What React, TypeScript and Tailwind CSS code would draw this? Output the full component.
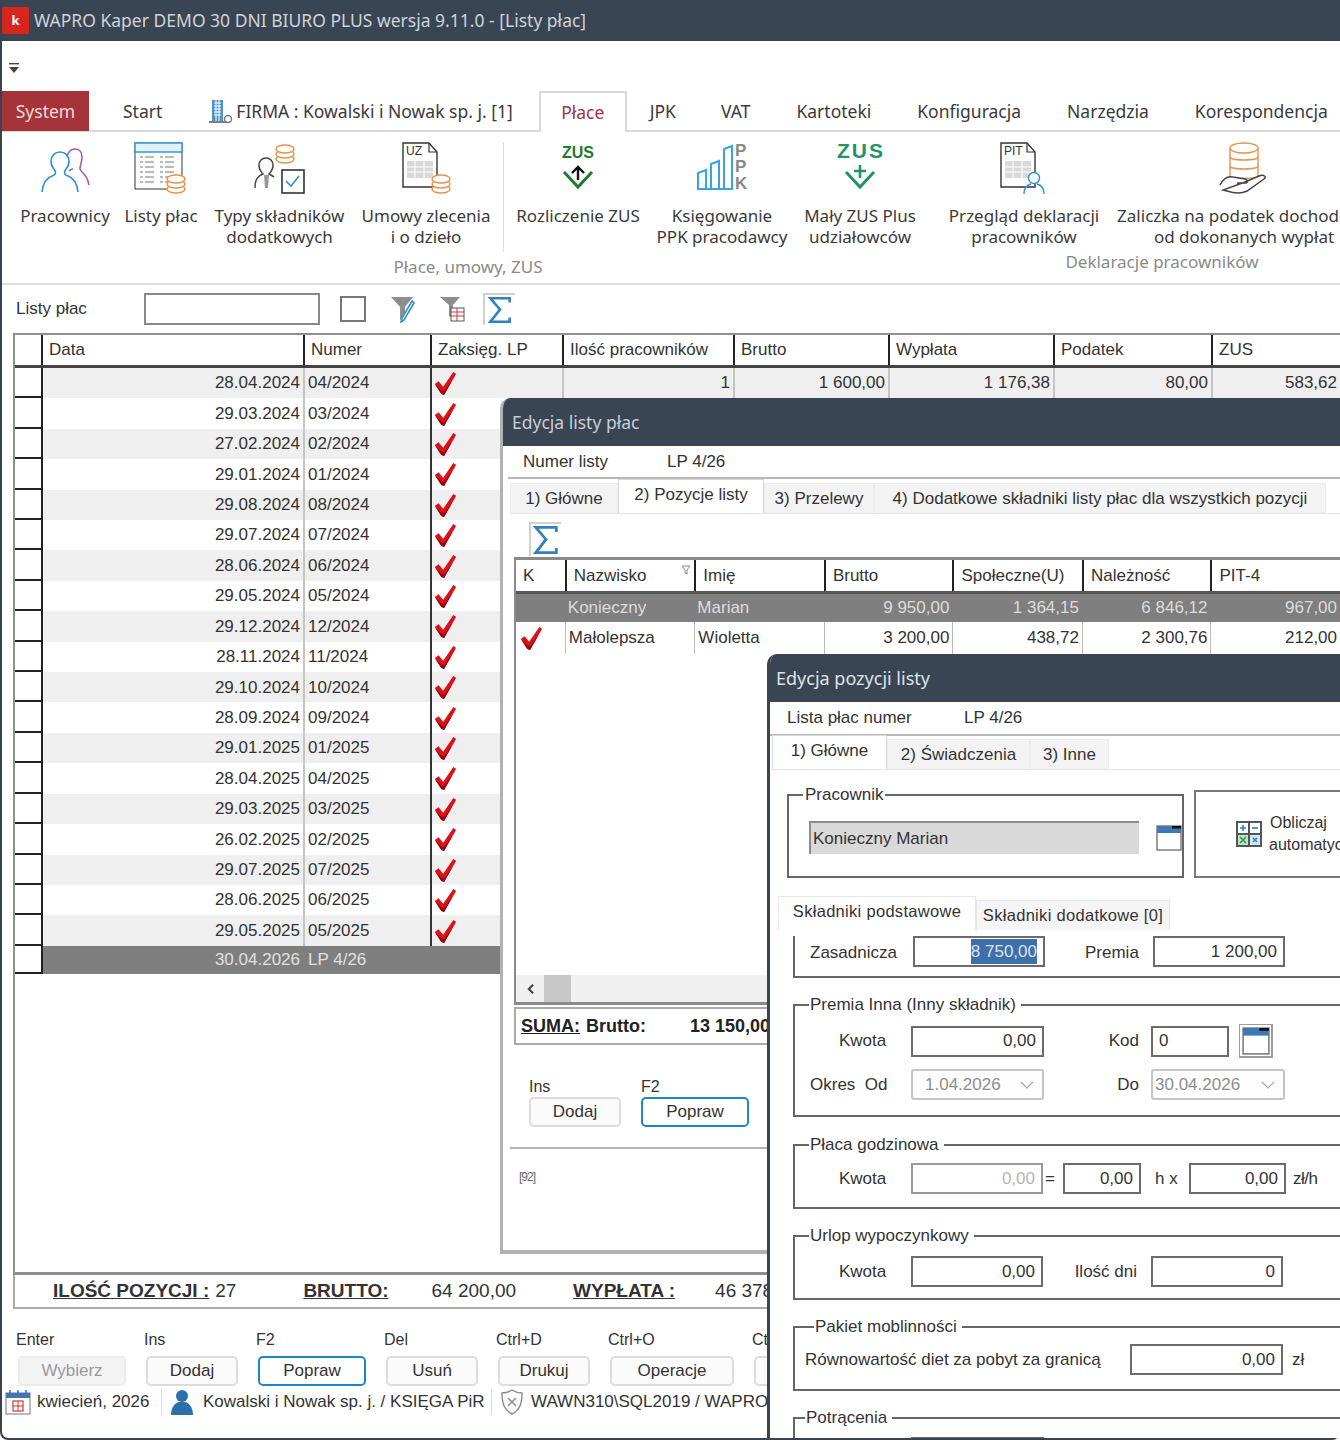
import type { ReactNode } from "react";

const NOTO = "font-['Noto_Sans',sans-serif]";

const rows = [
  ["28.04.2024", "04/2024"],
  ["29.03.2024", "03/2024"],
  ["27.02.2024", "02/2024"],
  ["29.01.2024", "01/2024"],
  ["29.08.2024", "08/2024"],
  ["29.07.2024", "07/2024"],
  ["28.06.2024", "06/2024"],
  ["29.05.2024", "05/2024"],
  ["29.12.2024", "12/2024"],
  ["28.11.2024", "11/2024"],
  ["29.10.2024", "10/2024"],
  ["28.09.2024", "09/2024"],
  ["29.01.2025", "01/2025"],
  ["28.04.2025", "04/2025"],
  ["29.03.2025", "03/2025"],
  ["26.02.2025", "02/2025"],
  ["29.07.2025", "07/2025"],
  ["28.06.2025", "06/2025"],
  ["29.05.2025", "05/2025"],
];

const mainColumns = [
  { name: "Data", w: "w-[262px]" },
  { name: "Numer", w: "w-[127px]" },
  { name: "Zaksięg. LP", w: "w-[132px]" },
  { name: "Ilość pracowników", w: "w-[171px]" },
  { name: "Brutto", w: "w-[155px]" },
  { name: "Wypłata", w: "w-[165px]" },
  { name: "Podatek", w: "w-[158px]" },
  { name: "ZUS", w: "w-[140px]" },
];

const shortcuts = [
  { key: "Enter", label: "Wybierz", w: "w-[108px]", kind: "off" },
  { key: "Ins", label: "Dodaj", w: "w-[92px]", kind: "" },
  { key: "F2", label: "Popraw", w: "w-[108px]", kind: "on" },
  { key: "Del", label: "Usuń", w: "w-[92px]", kind: "" },
  { key: "Ctrl+D", label: "Drukuj", w: "w-[92px]", kind: "" },
  { key: "Ctrl+O", label: "Operacje", w: "w-[124px]", kind: "" },
  { key: "Ctrl", label: "", w: "w-[92px]", kind: "" },
];

const Check = ({ className = "" }: { className?: string }) => (
  <svg viewBox="0 0 24 26" className={className}>
    <path d="M1 14 5 11 10 17 21 1 24 3 11 26 8 25Z" fill="#e0101a" />
    <path d="M1 14 8 25 11 26 24 3 22 7 11 22 8 21Z" fill="#8e0a10" />
  </svg>
);

const Sigma = ({ className = "" }: { className?: string }) => (
  <svg viewBox="0 0 24 28" className={className} fill="none">
    <path d="M21 7V3H3l9 10.5L3 25h18v-4" stroke="#2f7fc1" strokeWidth="2.4" />
  </svg>
);

const Coins = ({ x, y, n = 3 }: { x: number; y: number; n?: number }) => (
  <g fill="#fff" stroke="#e8924a" strokeWidth="1.4">
    {Array.from({ length: n }).map((_, i) => (
      <ellipse key={i} cx={x} cy={y - i * 5} rx="9" ry="4" />
    ))}
  </g>
);

const PeopleIcon = () => (
  <svg viewBox="0 0 52 52" className="w-[52px] h-[52px]" fill="none" strokeWidth="1.6">
    <path d="M28 15c1-5 4-8 8-8s7 3 7 8-2 8-2 12c0 3 7 4 9 16" stroke="#a35bb0" />
    <path d="M30 29c1-1 3-2 4-2" stroke="#a35bb0" />
    <path d="M3 50c1-11 6-15 12-17 2-1 2-3 0-6-2-2-3-5-3-8 0-5 4-9 9-9s9 4 9 9c0 3-1 6-3 8-2 3-2 5 0 6 6 2 11 6 12 17" stroke="#2d93d0" />
  </svg>
);

const ListIcon = () => (
  <svg viewBox="0 0 54 54" className="w-[54px] h-[54px]" fill="none">
    <rect x="1" y="1" width="47" height="46" fill="#fff" stroke="#556" strokeWidth="1.2" />
    <rect x="1" y="1" width="47" height="9" fill="#e3f1fb" stroke="#2d93d0" strokeWidth="1.4" />
    {[15, 20, 25, 30, 35, 40].map((y) => (
      <path key={y} d={`M6 ${y}h3M11 ${y}h9M26 ${y}h3M31 ${y}h9`} stroke="#777" strokeWidth="1.2" />
    ))}
    <Coins x={42} y={47} />
  </svg>
);

const TypesIcon = () => (
  <svg viewBox="0 0 54 54" className="w-[54px] h-[54px]" fill="none">
    <Coins x={32} y={17} n={3} />
    <path d="M2 46c0-9 3-12 8-14-3-3-4-6-4-9 0-4 3-7 7-7s7 3 7 7c0 3-1 6-4 9 2 1 4 2 5 3" fill="#fff" stroke="#444" strokeWidth="1.5" />
    <path d="M11 33l1 13h3l1-13z" fill="#999" />
    <rect x="29" y="28" width="22" height="23" fill="#fff" stroke="#333" strokeWidth="1.6" />
    <path d="M33 39l5 5 8-10" stroke="#2d93d0" strokeWidth="1.6" />
  </svg>
);

const DocIcon = ({ label, children }: { label: string; children: ReactNode }) => (
  <svg viewBox="0 0 54 54" className="w-[54px] h-[54px]" fill="none">
    <path d="M4 1h26l8 9v35H4Z" fill="#fff" stroke="#333" strokeWidth="1.4" />
    <path d="M30 1v9h8" stroke="#333" strokeWidth="1.2" />
    <text x="7" y="13" fontSize="12" fill="#333" fontFamily="Liberation Sans, sans-serif">{label}</text>
    <rect x="8" y="19" width="26" height="17" fill="#d9d9d9" />
    <path d="M8 25h26M8 30h26M16 19v17M25 19v17" stroke="#fff" strokeWidth="1" />
    {children}
  </svg>
);

const ZusIcon = ({ plus, color }: { plus?: boolean; color: string }) => (
  <svg viewBox="0 0 54 54" className="w-[54px] h-[54px]" fill="none">
    <text x="27" y="16" textAnchor="middle" fontSize={plus ? 21 : 16} fontWeight="700" fill={color} fontFamily="Liberation Sans, sans-serif" textLength={plus ? 46 : 32}>ZUS</text>
    <path d="M13 30l14 15 14-15" stroke={color} strokeWidth="3" />
    {plus ? (
      <path d="M27 23v13M21 29h12" stroke={color} strokeWidth="2.6" />
    ) : (
      <path d="M27 38V25M21 31l6-6 6 6" stroke="#111" strokeWidth="2.4" />
    )}
  </svg>
);

const PpkIcon = () => (
  <svg viewBox="0 0 54 54" className="w-[54px] h-[54px]" fill="none">
    <path d="M3 47V31l8-3v19ZM16 47V22l8-3v28ZM29 47V7l8-3v43Z" stroke="#35a6e0" strokeWidth="2" />
    <path d="M3 47h34" stroke="#35a6e0" strokeWidth="2" />
    <g fontSize="17" fontWeight="700" fill="#8a8a8a" fontFamily="Liberation Sans, sans-serif">
      <text x="40" y="14">P</text>
      <text x="40" y="30">P</text>
      <text x="40" y="47">K</text>
    </g>
  </svg>
);

const PitIcon = () => (
  <DocIcon label="PIT">
    <circle cx="37" cy="36" r="5.5" fill="#fff" stroke="#2d93d0" strokeWidth="1.4" />
    <path d="M27 52c0-7 3-9 7-10M47 52c0-7-3-9-7-10" stroke="#2d93d0" strokeWidth="1.4" />
  </DocIcon>
);

const HandIcon = () => (
  <svg viewBox="0 0 54 54" className="w-[54px] h-[54px]" fill="none">
    <g fill="#fff" stroke="#e8924a" strokeWidth="1.4">
      <path d="M13 6v28c0 3 28 3 28 0V6" />
      <ellipse cx="27" cy="6" rx="14" ry="5" />
      <path d="M13 15c0 4 28 4 28 0M13 24c0 4 28 4 28 0" />
    </g>
    <path d="M3 43c3-6 8-9 13-8l12 2c3 1 3 4 0 4h-8M28 40l14-6c5-2 8 1 5 3L30 49c-6 3-14 2-20 0l-4-1Z" fill="#fff" stroke="#444" strokeWidth="1.5" />
  </svg>
);

const CalendarMini = ({ className = "" }: { className?: string }) => (
  <svg viewBox="0 0 26 26" className={className} fill="none">
    <rect x="1" y="1" width="24" height="24" fill="#fff" stroke="#777" strokeWidth="1.4" />
    <rect x="1" y="1" width="24" height="7" fill="#3f78b5" />
    <rect x="16" y="1" width="9" height="2.5" fill="#111" />
  </svg>
);

const RibbonItem = ({ w, icon, lines }: { w: string; icon: ReactNode; lines: string[] }) => (
  <div className={`${w} flex flex-col items-center whitespace-nowrap`}>
    <div className="h-[63px] flex items-start justify-center">{icon}</div>
    {lines.map((l) => (
      <div key={l} className="text-[17px] leading-[21px] text-[#3a3a3a]">{l}</div>
    ))}
  </div>
);

const Tab = ({ children, active, w, ml }: { children: ReactNode; active?: boolean; w: string; ml?: string }) => (
  <div
    className={`${w} ${ml ?? ""} h-[30px] shrink-0 flex items-center justify-center whitespace-nowrap text-[17px] text-[#333] ${
      active ? "self-end h-[34px] bg-white border-x border-t border-[#d9d9d9] pb-1" : "self-end bg-[#f3f3f3] border-x border-t border-[#ececec]"
    }`}
  >
    {children}
  </div>
);

const Field = ({ w, value, muted, select, left }: { w: string; value: string; muted?: boolean; select?: boolean; left?: boolean }) => (
  <div
    className={`${w} h-[31px] shrink-0 border-2 flex items-center px-[6px] text-[17px] ${
      select
        ? "border-[#c4c4c4] rounded-[3px] text-[#8e8e8e] bg-[#fdfdfd]"
        : muted
          ? "border-[#9a9a9a] justify-end text-[#b5b5b5]"
          : `border-[#6b6b6b] text-[#333] ${left ? "" : "justify-end"}`
    }`}
  >
    {value}
  </div>
);

const DateSelect = ({ w, value, pad }: { w: string; value: string; pad: string }) => (
  <div className={`${w} h-[31px] shrink-0 border-2 border-[#c4c4c4] rounded-[3px] flex items-center justify-between pr-[8px] ${pad} text-[17px] text-[#8e8e8e] bg-[#fdfdfd]`}>
    <span>{value}</span>
    <svg viewBox="0 0 14 8" className="w-[14px] h-[8px]" fill="none">
      <path d="M1 1l6 6 6-6" stroke="#a5a5a5" strokeWidth="1.2" />
    </svg>
  </div>
);

const Group = ({ title, labelX, h, mt, children }: { title: string; labelX: string; h: string; mt: string; children?: ReactNode }) => (
  <div className={`relative ${h} ${mt} ml-[23px] border-2 border-r-0 border-[#666] pt-[18px]`}>
    <span className={`absolute -top-[12px] ${labelX} bg-white pr-[5px] pl-[1px] text-[17px] leading-[22px] text-[#333]`}>{title}</span>
    {children}
  </div>
);

const Label = ({ children, w, className = "" }: { children: ReactNode; w: string; className?: string }) => (
  <div className={`${w} shrink-0 text-[17px] text-[#333] whitespace-nowrap ${className}`}>{children}</div>
);

const Button = ({ children, w, kind }: { children?: ReactNode; w: string; kind?: string }) => (
  <div
    className={`${w} h-[30px] shrink-0 rounded-[5px] border-2 flex items-center justify-center text-[17px] ${
      kind === "on"
        ? "border-[#1b86c8] text-[#333] bg-white"
        : kind === "off"
          ? "border-[#ececec] bg-[#f4f4f4] text-[#9a9a9a]"
          : "border-[#dcdcdc] bg-[#fbfbfb] text-[#333]"
    }`}
  >
    {children}
  </div>
);

const PositionsGrid = () => {
  const cols = [
    ["w-[49px]", "K", "", ""],
    ["w-[130px]", "Nazwisko", "Konieczny", "Małolepsza"],
    ["w-[130px]", "Imię", "Marian", "Wioletta"],
    ["w-[129px]", "Brutto", "9 950,00", "3 200,00"],
    ["w-[130px]", "Społeczne(U)", "1 364,15", "438,72"],
    ["w-[129px]", "Należność", "6 846,12", "2 300,76"],
    ["w-[130px]", "PIT-4", "967,00", "212,00"],
  ];
  return (
    <div className="h-[448px] ml-[11px] border-t-[3px] border-l-2 border-b-[3px] border-[#8a8a8a] flex flex-col">
      <div className="flex h-[31px] border-b-[3px] border-[#555] box-content">
        {cols.map((c, i) => (
          <div key={c[1]} className={`${c[0]} relative flex items-center pl-[7px] text-[17px] text-[#333] ${i ? "border-l-2 border-[#222]" : ""}`}>
            {c[1]}
            {c[1] === "Nazwisko" && (
              <svg viewBox="0 0 10 10" className="absolute top-[5px] right-[3px] w-[10px] h-[10px]" fill="none">
                <path d="M1 1h8L6 5v4L4 8V5Z" stroke="#888" />
              </svg>
            )}
          </div>
        ))}
      </div>
      <div className="flex h-[28px] bg-[#7f7f7f]">
        {cols.map((c, i) => (
          <div key={c[1]} className={`${c[0]} flex items-center text-[17px] text-[#dcdcdc] ${i > 2 ? "justify-end pr-[3px]" : "pl-[3px]"}`}>
            {c[2]}
          </div>
        ))}
      </div>
      <div className="flex h-[32px]">
        {cols.map((c, i) => (
          <div key={c[1]} className={`${c[0]} flex items-center text-[17px] text-[#333] ${i > 2 ? "justify-end pr-[3px]" : "pl-[3px]"} ${i ? "border-l border-[#bbb]" : ""}`}>
            {i ? c[3] : <Check className="w-[24px] h-[24px]" />}
          </div>
        ))}
      </div>
      <div className="flex-1" />
      <div className="h-[27px] bg-[#f0f0f0] flex">
        <div className="w-[28px] flex items-center justify-center">
          <svg viewBox="0 0 10 14" className="w-[9px] h-[12px]" fill="none">
            <path d="M8 2 3 7l5 5" stroke="#444" strokeWidth="2.4" />
          </svg>
        </div>
        <div className="w-[27px] bg-[#c8c8c8]" />
      </div>
    </div>
  );
};

const PayrollDialog = () => (
  <div className="absolute left-[500px] top-[398px] w-[840px] h-[856px] bg-white rounded-tl-[10px] border-l-[3px] border-b-[4px] border-[#b2b2b2] overflow-hidden">
    <div className={`h-[48px] -ml-[3px] bg-[#3a4553] flex items-center pl-[12px] text-[17.5px] text-[#c7ced6] ${NOTO}`}>Edycja listy płac</div>
    <div className="h-[33px] ml-[5px] flex items-center pl-[15px] text-[17px] text-[#333] border-b-2 border-[#b8b8b8]">
      <span className="w-[144px]">Numer listy</span>
      <span>LP 4/26</span>
    </div>
    <div className="h-[35px] ml-[7px] flex items-end border-b border-[#e4e4e4]">
      <Tab w="w-[108px]">1) Główne</Tab>
      <Tab w="w-[146px]" active>2) Pozycje listy</Tab>
      <Tab w="w-[110px]">3) Przelewy</Tab>
      <Tab w="w-[452px]">4) Dodatkowe składniki listy płac dla wszystkich pozycji</Tab>
    </div>
    <div className="h-[43px] pl-[26px] pt-[8px]">
      <div className="w-[32px] h-[34px] border-l-2 border-t-2 border-[#d0d0d0]">
        <Sigma className="w-[30px] h-[32px]" />
      </div>
    </div>
    <PositionsGrid />
    <div className="h-[38px] mt-[2px] ml-[11px] border-2 border-r-0 border-[#aaa] flex items-center pl-[5px] text-[18px] text-[#222]">
      <b className="underline font-bold">SUMA:</b>
      <b className="ml-[6px] w-[104px] font-bold">Brutto:</b>
      <b className="font-bold">13 150,00</b>
    </div>
    <div className="h-[104px] ml-[7px] border-b-2 border-[#b5b5b5] pt-[30px] pl-[19px]">
      <div className="flex gap-[20px]">
        <div className="w-[92px]">
          <div className="h-[22px] text-[16px] text-[#333]">Ins</div>
          <Button w="w-[92px]">Dodaj</Button>
        </div>
        <div className="w-[108px]">
          <div className="h-[22px] text-[16px] text-[#333]">F2</div>
          <Button w="w-[108px]" kind="on">Popraw</Button>
        </div>
      </div>
    </div>
    <div className="pl-[16px] pt-[19px] text-[12px] text-[#666] tracking-[-1px]">[92]</div>
  </div>
);

const PositionDialog = () => (
  <div className="absolute left-[767px] top-[654px] w-[573px] bottom-[2px] bg-white rounded-tl-[10px] border-l-[3px] border-[#3a4553] overflow-hidden">
    <div className={`h-[48px] -ml-[3px] bg-[#3a4553] flex items-center pl-[9px] text-[18px] text-[#dfe3e8] ${NOTO}`}>Edycja pozycji listy</div>
    <div className="h-[34px] flex items-center pl-[17px] text-[17px] text-[#333] border-b-2 border-[#b8b8b8]">
      <span className="w-[177px]">Lista płac numer</span>
      <span>LP 4/26</span>
    </div>
    <div className="h-[34px] ml-[2px] flex items-end border-b border-[#e4e4e4]">
      <Tab w="w-[115px]" active>1) Główne</Tab>
      <Tab w="w-[143px]">2) Świadczenia</Tab>
      <Tab w="w-[79px]">3) Inne</Tab>
    </div>
    <div className="flex mt-[20px] items-start">
      <div className="relative ml-[17px] w-[414px] h-[84px] mt-[4px] border-2 border-[#666] pt-[25px] pl-[20px] flex">
        <span className="absolute -top-[12px] left-[14px] bg-white px-[2px] text-[17px] leading-[22px] text-[#333]">Pracownik</span>
        <div className="w-[330px] h-[33px] bg-[#d9d9d9] border-t-2 border-l-2 border-[#8c8c8c] flex items-center pl-[2px] text-[17px] text-[#333]">Konieczny Marian</div>
        <CalendarMini className="ml-[17px] mt-[4px] w-[26px] h-[26px]" />
      </div>
      <div className="ml-[10px] flex-1 h-[88px] border-2 border-r-0 border-[#777] flex items-center pl-[40px]">
        <svg viewBox="0 0 26 26" className="w-[26px] h-[26px] shrink-0">
          <rect width="26" height="26" fill="#555" />
          <rect x="2" y="2" width="10" height="10" fill="#fff" />
          <rect x="14" y="2" width="10" height="10" fill="#fff" />
          <rect x="2" y="14" width="10" height="10" fill="#bfe3c4" />
          <rect x="14" y="14" width="10" height="10" fill="#cfe6f5" />
          <path d="M4 7h6M7 4v6" stroke="#1b86c8" strokeWidth="1.6" />
          <path d="M16 7h6" stroke="#1b86c8" strokeWidth="1.6" />
          <path d="M4 16l6 6M10 16l-6 6" stroke="#2e9b4a" strokeWidth="1.6" />
          <path d="M17 17l4 4M21 17l-4 4" stroke="#1b86c8" strokeWidth="1.4" />
        </svg>
        <div className="ml-[7px] text-[16px] leading-[22px] text-[#333] whitespace-nowrap">
          <div className="ml-[1px]">Obliczaj</div>
          <div>automatycznie</div>
        </div>
      </div>
    </div>
    <div className="flex items-end h-[34px] mt-[18px] ml-[8px]">
      <div className="w-[198px] h-[34px] bg-white border border-b-0 border-[#e8e8e8] flex items-center justify-center pb-1 text-[16.5px] tracking-[0.3px] text-[#333]">Składniki podstawowe</div>
      <div className="w-[194px] h-[30px] bg-[#f5f5f5] border border-b-0 border-[#e6e6e6] flex items-center justify-center text-[16.5px] tracking-[0.3px] text-[#333]">Składniki dodatkowe [0]</div>
    </div>
    <div className="h-[42px] mt-[6px] ml-[23px] border-l-2 border-b-2 border-[#666] flex pl-[15px] items-start">
      <Label w="w-[103px]" className="pt-[4px]">Zasadnicza</Label>
      <div className="w-[132px] h-[31px] shrink-0 border-2 border-[#6b6b6b] flex items-center justify-end pr-[6px] text-[17px]">
        <span className="bg-[#3f6fa8] text-[#d7e3f0]">8 750,00</span>
      </div>
      <Label w="w-[108px]" className="pt-[4px] pl-[40px]">Premia</Label>
      <Field w="w-[132px]" value="1 200,00" />
    </div>
    <Group title="Premia Inna (Inny składnik)" labelX="left-[14px]" h="h-[113px]" mt="mt-[26px]">
      <div className="flex items-center pl-[44px]">
        <Label w="w-[72px]">Kwota</Label>
        <Field w="w-[133px]" value="0,00" />
        <Label w="w-[107px]" className="text-right pr-[12px]">Kod</Label>
        <Field w="w-[78px]" value="0" left />
        <div className="ml-[10px] w-[34px] h-[34px] p-[2px] border-r-2 border-b-2 border-t border-l border-[#9c9c9c]">
          <CalendarMini className="w-[28px] h-[28px]" />
        </div>
      </div>
      <div className="flex items-center pl-[15px] mt-[11px]">
        <Label w="w-[101px]">Okres&nbsp;&nbsp;Od</Label>
        <DateSelect w="w-[133px]" value="1.04.2026" pad="pl-[12px]" />
        <Label w="w-[107px]" className="text-right pr-[12px]">Do</Label>
        <DateSelect w="w-[134px]" value="30.04.2026" pad="pl-[2px]" />
      </div>
    </Group>
    <Group title="Płaca godzinowa" labelX="left-[14px]" h="h-[65px]" mt="mt-[27px]">
      <div className="flex items-center pl-[44px] -mt-[1px]">
        <Label w="w-[72px]">Kwota</Label>
        <Field w="w-[132px]" value="0,00" muted />
        <Label w="w-[20px]" className="pl-[2px]">=</Label>
        <Field w="w-[78px]" value="0,00" />
        <Label w="w-[48px]" className="pl-[14px]">h x</Label>
        <Field w="w-[97px]" value="0,00" />
        <Label w="w-[40px]" className="pl-[7px] tracking-[-0.5px]">zł/h</Label>
      </div>
    </Group>
    <Group title="Urlop wypoczynkowy" labelX="left-[14px]" h="h-[65px]" mt="mt-[26px]">
      <div className="flex items-center pl-[44px] pt-[1px]">
        <Label w="w-[72px]">Kwota</Label>
        <Field w="w-[132px]" value="0,00" />
        <Label w="w-[108px]" className="text-right pr-[14px]">Ilość dni</Label>
        <Field w="w-[132px]" value="0" />
      </div>
    </Group>
    <Group title="Pakiet moblinności" labelX="left-[19px]" h="h-[65px]" mt="mt-[26px]">
      <div className="flex items-center pl-[10px] -mt-[2px]">
        <Label w="w-[325px]">Równowartość diet za pobyt za granicą</Label>
        <Field w="w-[153px]" value="0,00" />
        <Label w="w-[30px]" className="pl-[9px]">zł</Label>
      </div>
    </Group>
    <Group title="Potrącenia" labelX="left-[10px]" h="h-[60px]" mt="mt-[26px]">
      <div className="ml-[116px] w-[133px] h-[20px] border-2 border-[#6b6b6b]" />
    </Group>
  </div>
);

export default function App() {
  return (
    <div className="relative w-[1340px] h-[1440px] overflow-hidden bg-white font-['Liberation_Sans',sans-serif]">
      <div className="h-full flex flex-col border-l-2 border-b-2 border-[#39434f] rounded-b-[8px] overflow-hidden">
        {/* title bar */}
        <div className={`h-[41px] shrink-0 -ml-[2px] bg-[#3a4553] flex items-center text-[17.5px] text-[#cdd3da] ${NOTO}`}>
          <div className="ml-[2px] w-[27px] h-[27px] bg-[#d8261f] rounded-[2px] flex items-center justify-center text-white text-[13px] font-bold">k</div>
          <span className="ml-[5px]">WAPRO Kaper DEMO 30 DNI BIURO PLUS wersja 9.11.0 - [Listy płac]</span>
        </div>
        {/* quick access */}
        <div className="h-[50px] shrink-0 flex items-center pl-[6px]">
          <svg viewBox="0 0 12 12" className="w-[12px] h-[12px] mt-[3px]">
            <path d="M1 1h10v1.4H1Z" fill="#444" />
            <path d="M1 5h10L6 11Z" fill="#444" />
          </svg>
        </div>
        {/* ribbon tabs */}
        <div className={`h-[41px] shrink-0 flex items-end border-b-2 border-[#d9d9d9] text-[17.5px] text-[#3a3a3a] ${NOTO}`}>
          <div className="w-[87px] h-[40px] -mb-[1px] bg-[#a5343a] text-[#f2dcdc] flex items-center justify-center">System</div>
          <div className="ml-[34px] h-[38px] flex items-center">Start</div>
          <div className="ml-[45px] h-[38px] flex items-center">
            <svg viewBox="0 0 26 26" className="w-[26px] h-[26px] mr-[3px]" fill="none">
              <rect x="5" y="2" width="11" height="21" fill="#4d94cf" />
              <path d="M7 5h7M7 8h7M7 11h7M7 14h7M7 17h7M9 2v21M12 2v21" stroke="#fff" />
              <path d="M2 24h18" stroke="#555" strokeWidth="1.5" />
              <circle cx="21" cy="21" r="3.5" stroke="#777" strokeWidth="1.4" />
            </svg>
            FIRMA : Kowalski i Nowak sp. j. [1]
          </div>
          <div className="ml-[26px] w-[88px] h-[41px] -mb-[2px] bg-white border-x-2 border-t-2 border-[#d9d9d9] flex items-center justify-center text-[#a5343a]">Płace</div>
          <div className="ml-[23px] h-[38px] flex items-center">JPK</div>
          <div className="ml-[45px] h-[38px] flex items-center">VAT</div>
          <div className="ml-[46px] h-[38px] flex items-center">Kartoteki</div>
          <div className="ml-[46px] h-[38px] flex items-center">Konfiguracja</div>
          <div className="ml-[46px] h-[38px] flex items-center">Narzędzia</div>
          <div className="ml-[46px] h-[38px] flex items-center whitespace-nowrap">Korespondencja</div>
        </div>
        {/* ribbon */}
        <div className={`h-[153px] shrink-0 flex border-b-2 border-[#dedede] pl-[14px] ${NOTO}`}>
          <div className="flex flex-col items-center pt-[10px]">
            <div className="flex">
              <RibbonItem w="w-[98px]" icon={<PeopleIcon />} lines={["Pracownicy"]} />
              <RibbonItem w="w-[78px] ml-[8px]" icon={<ListIcon />} lines={["Listy płac"]} />
              <RibbonItem w="w-[139px] ml-[10px]" icon={<TypesIcon />} lines={["Typy składników", "dodatkowych"]} />
              <RibbonItem w="w-[138px] ml-[8px]" icon={<DocIcon label="UZ"><Coins x={42} y={47} /></DocIcon>} lines={["Umowy zlecenia", "i o dzieło"]} />
              <div className="w-[1px] h-[110px] ml-[8px] bg-[#dedede]" />
              <RibbonItem w="w-[132px] ml-[8px]" icon={<ZusIcon color="#1f7a2e" />} lines={["Rozliczenie ZUS"]} />
              <RibbonItem w="w-[140px] ml-[8px]" icon={<PpkIcon />} lines={["Księgowanie", "PPK pracodawcy"]} />
              <RibbonItem w="w-[120px] ml-[8px]" icon={<ZusIcon plus color="#1f9468" />} lines={["Mały ZUS Plus", "udziałowców"]} />
            </div>
            <div className="mt-[4px] text-[17px] leading-[22px] text-[#8a8a8a]">Płace, umowy, ZUS</div>
          </div>
          <div className="w-[1px] h-[130px] ml-[12px] mt-[10px] bg-[#dedede]" />
          <div className="ml-[13px] flex flex-col items-center pt-[10px]">
            <div className="flex">
              <RibbonItem w="w-[158px]" icon={<PitIcon />} lines={["Przegląd deklaracji", "pracowników"]} />
              <RibbonItem w="w-[270px] ml-[6px]" icon={<HandIcon />} lines={["Zaliczka na podatek dochodowy", "od dokonanych wypłat"]} />
            </div>
            <div className="mt-[4px] text-[17px] leading-[22px] text-[#8a8a8a]">Deklaracje pracowników</div>
          </div>
        </div>
        {/* filter bar */}
        <div className="h-[48px] shrink-0 flex items-center pl-[14px] text-[17px] text-[#333]">
          <span className="w-[128px]">Listy płac</span>
          <div className="w-[176px] h-[32px] border-2 border-[#8a8a8a] bg-white" />
          <div className="ml-[20px] w-[26px] h-[26px] border-2 border-[#777]" />
          <svg viewBox="0 0 26 28" className="ml-[24px] w-[26px] h-[28px]" fill="none">
            <path d="M1 2h22L15 12v10l-5 3V12Z" fill="#8e8e8e" />
            <path d="M24 8 14 25l-3 2 1-4L22 6Z" fill="#fff" stroke="#2f8fd0" strokeWidth="1.6" />
          </svg>
          <svg viewBox="0 0 26 28" className="ml-[23px] w-[26px] h-[28px]" fill="none">
            <path d="M1 2h20l-7 8v14l-4-3V10Z" fill="#8e8e8e" />
            <rect x="12" y="13" width="13" height="13" fill="#fff" stroke="#555" />
            <path d="M12 17h13M12 21h13M18 13v13" stroke="#d33" />
          </svg>
          <div className="ml-[18px] w-[32px] h-[32px] border-l-2 border-t-2 border-[#d0d0d0]">
            <Sigma className="w-[30px] h-[30px]" />
          </div>
        </div>
        {/* main list */}
        <div className="h-[942px] shrink-0 ml-[11px] border-t-2 border-l-2 border-b-[3px] border-[#8f8f8f] overflow-hidden">
          <div className="flex h-[30px] border-b-[3px] border-[#444] box-content">
            <div className="w-[26px] shrink-0" />
            {mainColumns.map((c) => (
              <div key={c.name} className={`${c.w} shrink-0 border-l-2 border-[#222] flex items-center pl-[6px] text-[17px] text-[#333]`}>
                {c.name}
              </div>
            ))}
          </div>
          {rows.map((r, i) => (
            <div key={r[1] + i} className={`flex h-[30.42px] ${i % 2 ? "" : "bg-[#efefef]"}`}>
              <div className="w-[28px] shrink-0 bg-white border-r-2 border-b-2 border-[#222]" />
              <div className="w-[260px] shrink-0 flex items-center justify-end pr-[3px] text-[17px] text-[#333]">{r[0]}</div>
              <div className="w-[127px] shrink-0 flex items-center pl-[3px] border-l-2 border-[#c4c4c4] text-[17px] text-[#333]">{r[1]}</div>
              <div className="w-[132px] shrink-0 flex items-center pl-[1px] border-l-2 border-[#333]">
                <Check className="w-[24px] h-[24px]" />
              </div>
              {i === 0 && (
                <>
                  <div className="w-[171px] shrink-0 flex items-center justify-end pr-[3px] border-l-2 border-[#c4c4c4] text-[17px] text-[#333]">1</div>
                  <div className="w-[155px] shrink-0 flex items-center justify-end pr-[3px] border-l-2 border-[#c4c4c4] text-[17px] text-[#333]">1 600,00</div>
                  <div className="w-[165px] shrink-0 flex items-center justify-end pr-[3px] border-l-2 border-[#c4c4c4] text-[17px] text-[#333]">1 176,38</div>
                  <div className="w-[158px] shrink-0 flex items-center justify-end pr-[3px] border-l-2 border-[#c4c4c4] text-[17px] text-[#333]">80,00</div>
                  <div className="w-[129px] shrink-0 flex items-center justify-end pr-[3px] border-l-2 border-[#c4c4c4] text-[17px] text-[#333]">583,62</div>
                </>
              )}
            </div>
          ))}
          <div className="flex h-[28px]">
            <div className="w-[28px] shrink-0 bg-white border-r-2 border-b-2 border-[#222]" />
            <div className="w-[460px] flex bg-[#7f7f7f] text-[17px] text-[#e0e0e0]">
              <div className="w-[260px] flex items-center justify-end pr-[3px]">30.04.2026</div>
              <div className="pl-[5px] flex items-center">LP 4/26</div>
            </div>
          </div>
        </div>
        {/* totals */}
        <div className="h-[34px] shrink-0 ml-[11px] border-2 border-t-0 border-[#aaa] flex items-center text-[19px] text-[#333] whitespace-nowrap">
          <b className="ml-[38px] underline font-bold">ILOŚĆ POZYCJI :</b>
          <span className="ml-[6px]">27</span>
          <b className="ml-[67px] underline font-bold">BRUTTO:</b>
          <span className="ml-[43px]">64 200,00</span>
          <b className="ml-[57px] underline font-bold">WYPŁATA :</b>
          <span className="ml-[40px]">46 378,00</span>
        </div>
        {/* shortcuts */}
        <div className="h-[77px] shrink-0 ml-[14px] pt-[19px] flex gap-[20px]">
          {shortcuts.map((s) => (
            <div key={s.key} className={s.w}>
              <div className="h-[28px] text-[16px] text-[#333]">{s.key}</div>
              <div className="ml-[2px]">
                <Button w={s.w} kind={s.kind}>{s.label}</Button>
              </div>
            </div>
          ))}
        </div>
        {/* status bar */}
        <div className="h-[26px] mt-[3px] flex items-center text-[17px] text-[#333] whitespace-nowrap">
          <svg viewBox="0 0 26 26" className="ml-[3px] w-[26px] h-[26px]" fill="none">
            <rect x="1" y="4" width="24" height="21" fill="#fff" stroke="#777" />
            <rect x="1" y="4" width="24" height="5" fill="#3f78b5" />
            <path d="M5 1v5M21 1v5M13 1v5" stroke="#3f78b5" strokeWidth="1.6" />
            <rect x="8" y="12" width="10" height="10" fill="#fff" stroke="#d33" strokeWidth="1.2" />
            <path d="M8 17h10M13 12v10" stroke="#d33" />
          </svg>
          <span className="ml-[6px] w-[124px]">kwiecień, 2026</span>
          <div className="w-[1px] h-[26px] bg-[#ddd]" />
          <svg viewBox="0 0 24 26" className="ml-[8px] w-[24px] h-[26px]" fill="#2c6fad">
            <circle cx="12" cy="7" r="6" />
            <path d="M1 26c0-8 4-12 8-13h6c4 1 8 5 8 13Z" />
          </svg>
          <span className="ml-[9px] w-[288px]">Kowalski i Nowak sp. j. / KSIĘGA PiR</span>
          <div className="w-[1px] h-[26px] bg-[#ddd]" />
          <svg viewBox="0 0 24 26" className="ml-[8px] w-[24px] h-[26px]" fill="none" stroke="#888" strokeWidth="1.4">
            <path d="M12 1c3 2 6 3 10 3 0 10-2 17-10 21C4 21 2 14 2 4c4 0 7-1 10-3Z" />
            <path d="M8 9l8 8M16 9l-8 8" />
          </svg>
          <span className="ml-[7px]">WAWN310\SQL2019 / WAPRO_KAPER</span>
        </div>
      </div>
      <PayrollDialog />
      <PositionDialog />
    </div>
  );
}
